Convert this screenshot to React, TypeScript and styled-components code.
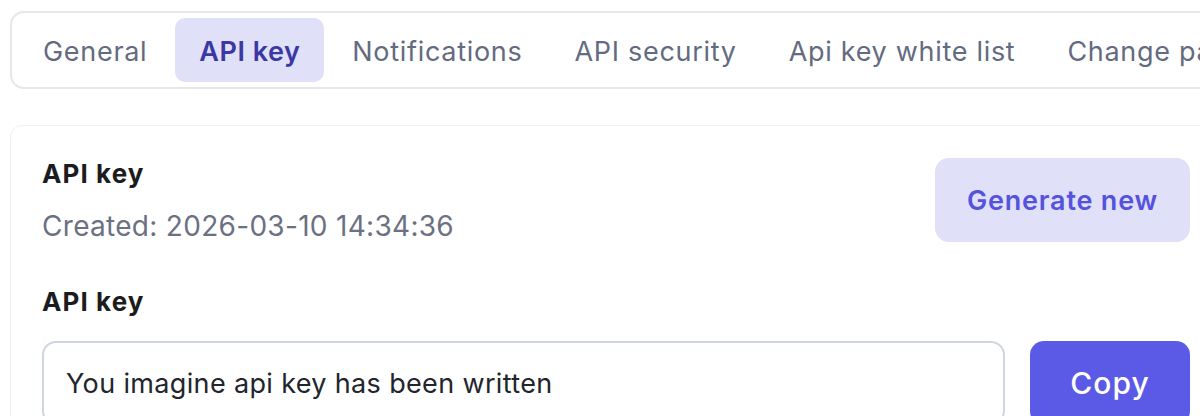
import React from "react";
import styled, { createGlobalStyle } from "styled-components";

const Global = createGlobalStyle`
  html, body { margin: 0; padding: 0; background: #ffffff; overflow: hidden; }
  body { font-family: Inter, "Noto Sans", sans-serif; -webkit-font-smoothing: antialiased; }
  * { box-sizing: border-box; }
`;

const Page = styled.div`
  width: 1232px;
  padding: 11px 10px 10px;
  display: flex;
  flex-direction: column;
  gap: 36px;
`;

const TabBar = styled.nav`
  display: flex;
  gap: 4px;
  padding: 5px 7px;
  border: 2px solid #e6e6eb;
  border-radius: 14px;
  background: #fff;
  white-space: nowrap;
  overflow: hidden;
`;

const Tab = styled.button<{ $active?: boolean }>`
  height: 64px;
  padding: 2px 24px 0;
  border: none;
  border-radius: 10px;
  font-family: Inter, sans-serif;
  font-size: 27px;
  letter-spacing: ${(p) => (p.$active ? "0.5px" : "0.7px")};
  font-weight: ${(p) => (p.$active ? 600 : 400)};
  color: ${(p) => (p.$active ? "#3b37a3" : "#646b80")};
  background: ${(p) => (p.$active ? "#e0e0f8" : "transparent")};
  flex-shrink: 0;
`;

const Card = styled.section`
  border: 1px solid #f1f1f4;
  border-radius: 12px;
  padding: 32px 31px;
  background: #fff;
  box-shadow: 0 1px 2px rgba(0, 0, 0, 0.02);
  display: flex;
  flex-direction: column;
`;

const HeaderRow = styled.div`
  display: flex;
  align-items: center;
  justify-content: space-between;
`;

const TitleBlock = styled.div`
  display: flex;
  flex-direction: column;
  gap: 20px;
`;

const Heading = styled.div`
  font-size: 26px;
  line-height: 32px;
  font-weight: 700;
  letter-spacing: 1.1px;
  color: #1b1c20;
`;

const Meta = styled.div`
  font-size: 28px;
  line-height: 32px;
  letter-spacing: 0.3px;
  color: #6b7182;
`;

const SoftButton = styled.button`
  height: 84px;
  padding: 0 32px;
  border: none;
  border-radius: 14px;
  background: #e0e0f8;
  color: #5552dc;
  font-family: Inter, sans-serif;
  font-size: 27px;
  letter-spacing: 0.8px;
  font-weight: 600;
`;

const Field = styled.div`
  margin-top: 44px;
  display: flex;
  flex-direction: column;
  gap: 23px;
`;

const InputRow = styled.div`
  display: flex;
  gap: 25px;
`;

const KeyInput = styled.div`
  flex: 1;
  height: 84px;
  border: 2px solid #cfd6e1;
  border-radius: 14px;
  padding: 0 22px;
  display: flex;
  align-items: center;
  font-size: 27px;
  letter-spacing: 0.35px;
  color: #22252c;
`;

const PrimaryButton = styled.button`
  width: 160px;
  height: 84px;
  border: none;
  border-radius: 14px;
  background: #5b5ae6;
  color: #ffffff;
  font-family: Inter, sans-serif;
  font-size: 30px;
  letter-spacing: 1px;
  font-weight: 500;
`;

const tabs = ["General", "API key", "Notifications", "API security", "Api key white list", "Change password"];

export default function App() {
  return (
    <>
      <Global />
      <Page>
        <TabBar>
          {tabs.map((t) => (
            <Tab key={t} $active={t === "API key"}>
              {t}
            </Tab>
          ))}
        </TabBar>
        <Card>
          <HeaderRow>
            <TitleBlock>
              <Heading>API key</Heading>
              <Meta>Created: 2026-03-10 14:34:36</Meta>
            </TitleBlock>
            <SoftButton>Generate new</SoftButton>
          </HeaderRow>
          <Field>
            <Heading>API key</Heading>
            <InputRow>
              <KeyInput>You imagine api key has been written</KeyInput>
              <PrimaryButton>Copy</PrimaryButton>
            </InputRow>
          </Field>
        </Card>
      </Page>
    </>
  );
}
